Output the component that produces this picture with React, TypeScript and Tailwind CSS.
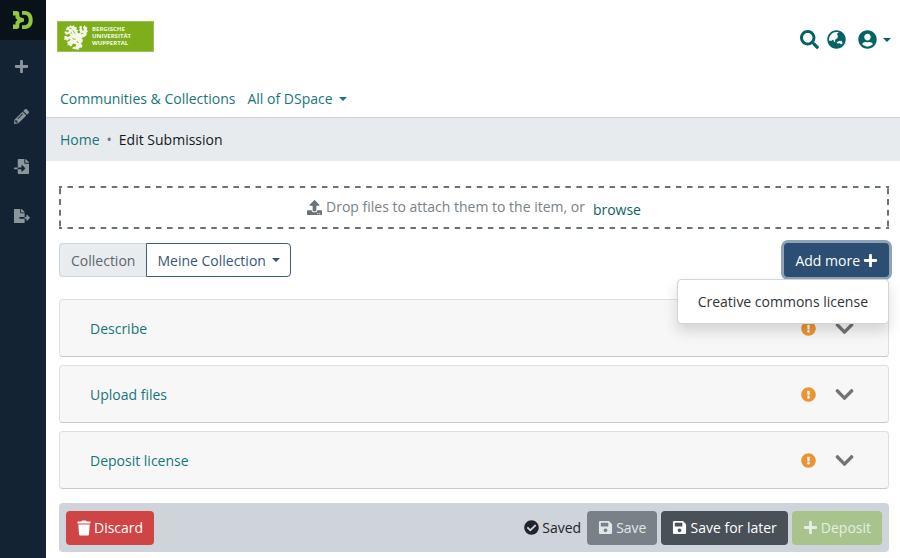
import type { ReactNode } from 'react';
import {
  FaCheckCircle,
  FaChevronDown,
  FaExclamationCircle,
  FaFileExport,
  FaFileImport,
  FaGlobeAsia,
  FaPencilAlt,
  FaPlus,
  FaSave,
  FaSearch,
  FaUpload,
  FaUserCircle,
} from 'react-icons/fa';

const sections = ['Describe', 'Upload files', 'Deposit license'];

const sidebarItems = [
  { label: 'New', icon: <FaPlus size={15} /> },
  { label: 'Edit', icon: <FaPencilAlt size={15} /> },
  { label: 'Import', icon: <FaFileImport size={15} /> },
  { label: 'Export', icon: <FaFileExport size={16} /> },
];

const Caret = () => (
  <span className="inline-block border-x-4 border-t-4 border-x-transparent" />
);

const TrashIcon = () => (
  <svg viewBox="0 0 14 16" className="h-4 w-3.5" fill="currentColor">
    <path d="M.5 1.500h3.800L5 .5h4l.7 1h3.800V3.500H.5zM1.300 4.500h11.400L12 14.200c-.1.800-.6 1.300-1.400 1.300H3.400c-.8 0-1.300-.5-1.400-1.300z" />
  </svg>
);

const DSpaceLogo = () => (
  <svg viewBox="0 0 20 18" className="h-[18px] w-5" fill="#93c83e">
    <path d="M0 0h3.800C5.300 0 6.300 1 6.300 2.500v1.700c0 1.200.6 1.900 1.800 2.200L11 7.400v3.200l-2.900 1c-1.200.3-1.800 1-1.800 2.200v1.700C6.300 17 5.300 18 3.800 18H0v-4.500h2.500V11L4.500 9l-2-2V4.500H0z" />
    <path d="M9 0h3C16.700 0 19.700 3.500 19.700 9s-3 9-7.700 9H9v-3.800h2.700c2.500 0 4-2 4-5.200s-1.500-5.200-4-5.200H9z" />
  </svg>
);

const Lion = () => (
  <svg viewBox="0 0 24 26" className="h-[26px] w-6 shrink-0" fill="#f4f9e6">
    <path d="M3 2.500l2 .3L6.500 1 8 2.500 10 1l.5 2 2.500.2-.8 2 2 1.300-1.200 1.500 2 1.500 1.500-1.200L15 6l1-1.500L15 3l2-1.500L18 3l-.3 2L19 7l1-1.500L19 3.500 20.500 1 22 3l1.500.5-.7 2L24 7.500l-1.500 1.300.3 2.200-2.500 2-2.800 1 1.500 2-.8 2.500-1.700 1 2 1.500-.5 2.500-2.500.2-1 2-2-.2L10.500 25 8 24.500l1-1.500 2.500-.5 1-1.500-2.500-1.500-1.500.5-.5 2-2 .5L5.500 21l-2 .5.500-2-1.500-1 2-1.200L6 16.500l.5-1.500-2 .5L3 17l-1-1.500-2 .5.700-2L0 12.500l2-.7L3.500 13 6 12l.5-1.500-2-.5L2 11 1.200 9.200 0 8l1.800-.7L3 8l2-.500L4.500 6l-2 .200L1.500 5l1.200-.800z" />
    <path d="M5.500 4.500h2M8.500 14.500l3 1M8 8.500l-1.500 1M13 17l1.500 2M9 6.500l2 3M17 10l2-1" stroke="#7eae1c" strokeWidth=".9" />
  </svg>
);

const Sidebar = () => (
  <aside className="flex w-[46px] shrink-0 flex-col bg-[#132333] text-[#8b959c]">
    <a href="#" aria-label="DSpace" className="flex h-10 items-center justify-center bg-[#091119]">
      <DSpaceLogo />
    </a>
    <nav className="flex flex-col pt-px">
      {sidebarItems.map((item) => (
        <button
          key={item.label}
          type="button"
          aria-label={item.label}
          className="flex h-[50px] items-center justify-center pr-[3px]"
        >
          {item.icon}
        </button>
      ))}
    </nav>
  </aside>
);

const Header = () => (
  <header className="border-b border-[#ced4da] text-[#036265]">
    <div className="flex items-center justify-between pt-[21px] pr-[9px] pl-[11px]">
      <a
        href="#"
        className="flex h-[31px] w-[97px] items-center gap-1 border border-[#9cc24d] bg-[#7eae1c] pl-1.5 text-[6px] leading-[7px] font-bold text-[#f4f9e6]"
      >
        <Lion />
        <span>
          BERGISCHE
          <br />
          UNIVERSITÄT
          <br />
          WUPPERTAL
        </span>
      </a>
      <div className="flex items-center gap-2 pt-1.5">
        <button type="button" aria-label="Search"><FaSearch size={19} /></button>
        <button type="button" aria-label="Language"><FaGlobeAsia size={19} /></button>
        <button type="button" aria-label="Profile" className="ml-1 flex items-center gap-1.5">
          <FaUserCircle size={19} />
          <Caret />
        </button>
      </div>
    </div>
    <nav className="flex gap-3 px-3.5 pt-9 pb-2 text-[#16767a]">
      <a href="#">Communities &amp; Collections</a>
      <button type="button" className="flex items-center gap-1.5">
        All of DSpace
        <Caret />
      </button>
    </nav>
  </header>
);

const Breadcrumb = () => (
  <nav aria-label="Breadcrumb" className="flex gap-[7px] bg-[#e7ebee] px-3.5 py-[11px]">
    <a href="#" className="text-[#16767a]">Home</a>
    <span className="text-[#6c757d]">•</span>
    <span className="text-[#16181b]">Edit Submission</span>
  </nav>
);

const DropZone = () => (
  <div className="flex h-[43px] items-center justify-center [background:linear-gradient(90deg,#68727b_3px,transparent_3px_8px,#68727b_8px)_top/11px_2px_round_no-repeat,linear-gradient(90deg,#68727b_3px,transparent_3px_8px,#68727b_8px)_bottom/11px_2px_round_no-repeat,linear-gradient(#68727b_3px,transparent_3px_8px,#68727b_8px)_left/2px_11px_no-repeat_round,linear-gradient(#68727b_3px,transparent_3px_8px,#68727b_8px)_right/2px_11px_no-repeat_round]">
    <FaUpload size={15} className="mr-1 text-[#68727b]" />
    <span className="pb-0.5 text-[#798188]">Drop files to attach them to the item, or</span>
    <button type="button" className="ml-2 pt-1 text-[#0c6268]">browse</button>
  </div>
);

const Section = ({ title }: { title: string }) => (
  <section className="flex h-[58px] items-center rounded-sm border border-[#dfdfdf] border-b-[#c9c9c9] bg-[#f7f7f7] pr-[33px] pl-[30px]">
    <a href="#" className="flex-1 text-[#16767a]">{title}</a>
    <FaExclamationCircle size={15} className="mr-[18px] text-[#ec9433]" />
    <button type="button" aria-label={`Expand ${title}`}>
      <FaChevronDown size={21} className="text-[#737373]" />
    </button>
  </section>
);

const FooterButton = ({ className, children }: { className: string; children: ReactNode }) => (
  <button type="button" className={`flex h-[34px] items-center gap-[3px] rounded px-[11px] ${className}`}>
    {children}
  </button>
);

export default function App() {
  return (
    <div className="flex min-h-screen bg-white font-['Open_Sans',sans-serif] text-sm leading-[21px]">
      <Sidebar />
      <div className="min-w-0 flex-1">
        <Header />
        <Breadcrumb />
        <main className="pt-[25px] pr-[11px] pb-1.5 pl-[13px]">
          <DropZone />
          <div className="mt-3.5 flex justify-between">
            <div className="flex h-[34px]">
              <span className="flex items-center rounded-l border border-r-0 border-[#ced4da] bg-[#e9ecef] px-[11px] text-[#5d656c]">
                Collection
              </span>
              <button
                type="button"
                className="flex items-center gap-1.5 rounded-r border border-[#3d5f85] px-2.5 text-[#34577e]"
              >
                Meine Collection
                <Caret />
              </button>
            </div>
            <div className="relative">
              <button
                type="button"
                className="flex h-[34px] items-center gap-[3px] rounded-sm bg-[#2b4e72] px-[11px] text-white ring-3 ring-[#8fa2b6]"
              >
                Add more
                <FaPlus size={15} />
              </button>
              <div className="absolute top-9 right-0 rounded border border-[#d4d4d4] bg-white py-[11px] shadow-[0_7px_14px_rgba(0,0,0,0.15)]">
                <button type="button" className="px-5 whitespace-nowrap text-[#303438]">
                  Creative commons license
                </button>
              </div>
            </div>
          </div>
          <div className="mt-[22px] flex flex-col gap-2">
            {sections.map((title) => (
              <Section key={title} title={title} />
            ))}
          </div>
          <footer className="mt-3.5 flex h-[49px] items-center gap-1 rounded bg-[#ced4da] px-[7px]">
            <FooterButton className="mr-auto bg-[#cf4444] text-white">
              <TrashIcon />
              Discard
            </FooterButton>
            <span className="mr-0.5 flex items-center gap-[3px] text-[#212529]">
              <FaCheckCircle size={15} />
              Saved
            </span>
            <FooterButton className="bg-[#7a8087] text-[#e3e6e8]">
              <FaSave size={15} />
              Save
            </FooterButton>
            <FooterButton className="bg-[#495057] text-white">
              <FaSave size={15} />
              Save for later
            </FooterButton>
            <FooterButton className="bg-[#a8c38c] text-[#e6eee0]">
              <FaPlus size={15} />
              Deposit
            </FooterButton>
          </footer>
        </main>
      </div>
    </div>
  );
}
